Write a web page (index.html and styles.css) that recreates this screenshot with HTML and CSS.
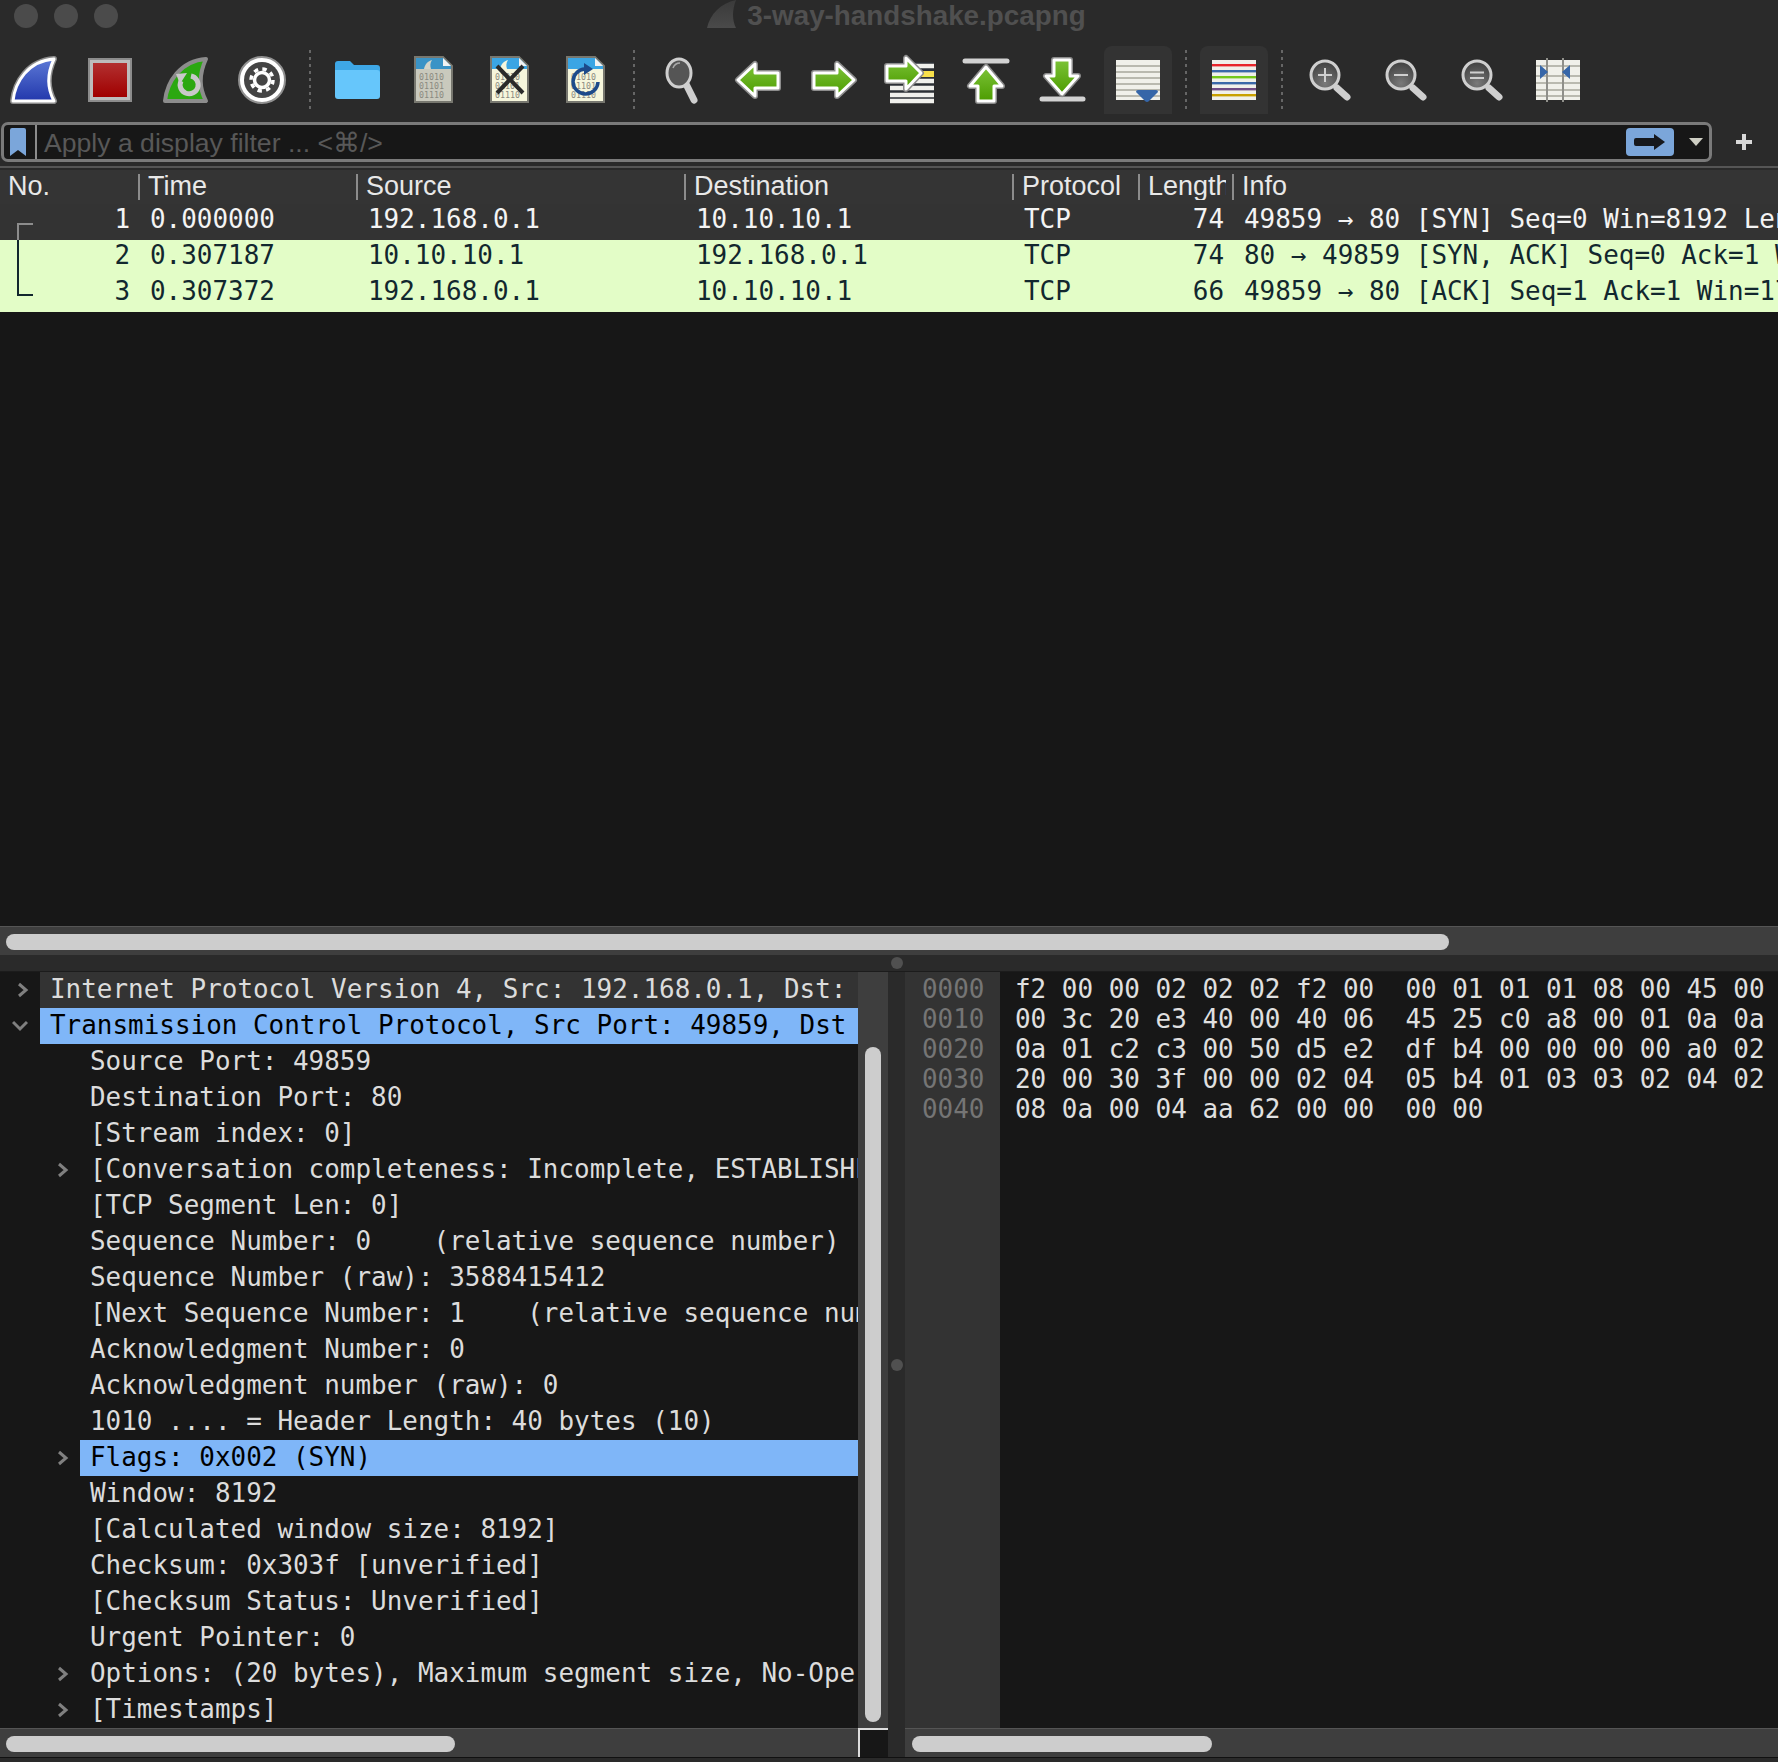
FILE: index.html
```html
<!DOCTYPE html>
<html lang="en">
<head>
    <meta charset="UTF-8">
    <meta name="viewport" content="width=device-width, initial-scale=1.0">
    <title>3-way-handshake.pcapng</title>
    <link rel="stylesheet" href="styles.css">
</head>
<body>
<div class="window">

    <!-- Title bar -->
    <div class="titlebar">
        <div class="lights"><i></i><i></i><i></i></div>
        <svg class="title-fin" width="30" height="30" viewBox="0 0 30 30">
            <defs><linearGradient id="fin" x1="0" y1="0" x2="0" y2="1"><stop offset="0" stop-color="#3a3a3a"/><stop offset="1" stop-color="#4a4a4a"/></linearGradient></defs>
            <path d="M0 28 C3 14 14 3 29 0 C25 10 25 20 29 28 Z" fill="url(#fin)"/>
        </svg>
        <span class="title-text">3-way-handshake.pcapng</span>
    </div>

    <!-- Toolbar -->
    <div class="toolbar">
        <div class="tool"><svg viewBox="0 0 68 68">
            <defs>
                <linearGradient id="blue" x1="0" y1="0" x2="0" y2="1"><stop offset="0" stop-color="#5c78d6"/><stop offset="1" stop-color="#2238ac"/></linearGradient>
                <linearGradient id="red" x1="0" y1="0" x2="0" y2="1"><stop offset="0" stop-color="#b23030"/><stop offset="1" stop-color="#a00000"/></linearGradient>
                <linearGradient id="green" x1="0" y1="0" x2="0" y2="1"><stop offset="0" stop-color="#7cc338"/><stop offset="1" stop-color="#4c9c00"/></linearGradient>
                <radialGradient id="lens" cx="0.5" cy="0.8" r="0.8"><stop offset="0" stop-color="#7a7a7a"/><stop offset="1" stop-color="#3e3e3e"/></radialGradient>
            </defs>
            <path class="edge" d="M13 55 C15 36 28 15 54 13 C47 28 47 42 54 55 Z"/>
            <path class="inner" fill="url(#blue)" d="M13 55 C15 36 28 15 54 13 C47 28 47 42 54 55 Z"/>
        </svg></div>
        <div class="tool"><svg viewBox="0 0 68 68">
            <rect x="13" y="13" width="42" height="42" fill="#bdbdbd" stroke="#8c8c8c" stroke-width="2"/>
            <rect x="17" y="17" width="34" height="34" fill="url(#red)"/>
        </svg></div>
        <div class="tool"><svg viewBox="0 0 68 68">
            <path d="M13 55 C15 36 28 15 54 13 C47 28 47 42 54 55 Z" fill="#2ba810" stroke="#8c8c8c" stroke-width="4" stroke-linejoin="round"/>
            <path d="M29 35 A9 9 0 1 0 39 30" fill="none" stroke="#c9c9c9" stroke-width="5"/>
            <path d="M28 38 L24 28 L35 27 Z" fill="#c9c9c9"/>
        </svg></div>
        <div class="tool"><svg viewBox="0 0 68 68">
            <circle cx="34" cy="34" r="23" fill="#fff" stroke="#909090" stroke-width="2"/>
            <circle cx="34" cy="34" r="18" fill="#444"/>
            <circle cx="34" cy="34" r="7.5" fill="none" stroke="#fff" stroke-width="3.5"/>
            <circle cx="34" cy="34" r="11" fill="none" stroke="#fff" stroke-width="3.5" stroke-dasharray="4.4 4.24"/>
        </svg></div>
        <div class="tool-sep"></div>
        <div class="tool"><svg viewBox="0 0 68 68">
            <path d="M11 18 Q11 15 14 15 H26 L30 19 H53 Q56 19 56 22 V30 H11 Z" fill="#3ea7e6"/>
            <path d="M11 24 H53 Q56 24 56 27 V50 Q56 53 53 53 H14 Q11 53 11 50 Z" fill="#66c6fb"/>
        </svg></div>
        <div class="tool"><svg viewBox="0 0 68 68">
            <path d="M15 11 H43 L52 20 V56 H15 Z" fill="#c9c9bd" stroke="#77776f" stroke-width="2"/>
            <path d="M16 12 H43 L51 20 V23 H16 Z" fill="#3a93c6"/>
            <path d="M43 12 L51 20 H43 Z" fill="#f2f2f2"/>
            <path d="M24 23 C25 18 28 15 32 14 C30 17 30 20 31 23 Z" fill="#d4d4c8"/>
            <text class="bits" x="19" y="34">01010</text>
            <text class="bits" x="19" y="43">01101</text>
            <text class="bits" x="19" y="52">01110</text>
        </svg></div>
        <div class="tool"><svg viewBox="0 0 68 68">
            <path d="M15 11 H43 L52 20 V56 H15 Z" fill="#f6f6dc" stroke="#77776f" stroke-width="2"/>
            <path d="M16 12 H43 L51 20 V23 H16 Z" fill="#3aa5e4"/>
            <path d="M43 12 L51 20 H43 Z" fill="#f2f2f2"/>
            <path d="M24 23 C25 18 28 15 32 14 C30 17 30 20 31 23 Z" fill="#f6f6dc"/>
            <text class="bits" x="19" y="34">01010</text>
            <text class="bits" x="19" y="43">01101</text>
            <text class="bits" x="19" y="52">01110</text>
            <path d="M21 20 L47 47 M47 20 L21 47" stroke="#2a2a2a" stroke-width="4" fill="none"/>
        </svg></div>
        <div class="tool"><svg viewBox="0 0 68 68">
            <path d="M15 11 H43 L52 20 V56 H15 Z" fill="#f6f6dc" stroke="#77776f" stroke-width="2"/>
            <path d="M16 12 H43 L51 20 V23 H16 Z" fill="#3aa5e4"/>
            <path d="M43 12 L51 20 H43 Z" fill="#f2f2f2"/>
            <text class="bits" x="19" y="34">01010</text>
            <text class="bits" x="19" y="43">01101</text>
            <text class="bits" x="19" y="52">01110</text>
            <path d="M33 23 A12.5 12.5 0 1 0 46 36" fill="none" stroke="#1d4a8a" stroke-width="3.5"/>
            <path d="M32 17 L41 23 L32 29 Z" fill="#1d4a8a"/>
        </svg></div>
        <div class="tool-sep"></div>
        <div class="tool"><svg viewBox="0 0 68 68">
            <path d="M38 38 L46 54" stroke="#cfcfcf" stroke-width="7" stroke-linecap="round"/>
            <ellipse cx="31" cy="27" rx="12" ry="14" fill="#555" stroke="#cfcfcf" stroke-width="3"/>
            <path d="M25 22 Q27 17 32 17" fill="none" stroke="#aaa" stroke-width="1.5"/>
        </svg></div>
        <div class="tool"><svg viewBox="0 0 68 68">
            <path class="edge" d="M14 34 L31 18 V27 H54 V42 H31 V50 Z"/>
            <path class="inner" fill="url(#green)" d="M14 34 L31 18 V27 H54 V42 H31 V50 Z"/>
        </svg></div>
        <div class="tool"><svg viewBox="0 0 68 68">
            <path class="edge" d="M54 34 L37 18 V27 H14 V42 H37 V50 Z"/>
            <path class="inner" fill="url(#green)" d="M54 34 L37 18 V27 H14 V42 H37 V50 Z"/>
        </svg></div>
        <div class="tool"><svg viewBox="0 0 68 68">
            <rect x="14" y="16" width="44" height="41" fill="#2c3036"/>
            <path d="M14 20 H58 M14 27.5 H58 M14 35 H58 M14 42 H58 M14 49 H58 M14 55 H58" stroke="#f0f0ec" stroke-width="4.5"/>
            <rect x="40" y="25" width="18" height="6" fill="#f8e04a"/>
            <path class="edge" d="M45 27 L30 12 V20 H11 V35 H30 V43 Z"/>
            <path class="inner" fill="url(#green)" d="M45 27 L30 12 V20 H11 V35 H30 V43 Z"/>
        </svg></div>
        <div class="tool"><svg viewBox="0 0 68 68">
            <path d="M13 15 H55" stroke="#d2d2d2" stroke-width="5" stroke-linecap="round"/>
            <path class="edge" d="M34 21 L18 40 H26 V55 H42 V40 H50 Z"/>
            <path class="inner" fill="url(#green)" d="M34 21 L18 40 H26 V55 H42 V40 H50 Z"/>
        </svg></div>
        <div class="tool"><svg viewBox="0 0 68 68">
            <path d="M14 53 H55" stroke="#d2d2d2" stroke-width="5" stroke-linecap="round"/>
            <path class="edge" d="M34 48 L18 30 H26 V14 H42 V30 H50 Z"/>
            <path class="inner" fill="url(#green)" d="M34 48 L18 30 H26 V14 H42 V30 H50 Z"/>
        </svg></div>
        <div class="tool is-on"><svg viewBox="0 0 68 68">
            <rect x="12" y="14" width="44" height="40" fill="#f0f0ea"/>
            <path d="M12 20 H56 M12 26 H56 M12 32 H56 M12 38 H56 M12 44 H56 M12 50 H56" stroke="#b9b9af" stroke-width="2"/>
            <path d="M32 46 Q32 44 34 44 H52 Q54 44 54 46 L45 55 Q43 57 41 55 Z" fill="#3666a8"/>
        </svg></div>
        <div class="tool-sep"></div>
        <div class="tool is-on"><svg viewBox="0 0 68 68">
            <rect x="12" y="14" width="44" height="40" fill="#f0f0ea"/>
            <rect x="12" y="18" width="44" height="2.4" fill="#e8262c"/>
            <rect x="12" y="24" width="44" height="2.4" fill="#3a68a8"/>
            <rect x="12" y="30" width="44" height="2.4" fill="#74c81c"/>
            <rect x="12" y="36" width="44" height="2.4" fill="#3a68a8"/>
            <rect x="12" y="42" width="44" height="2.4" fill="#6e4a84"/>
            <rect x="12" y="48" width="44" height="2.4" fill="#c8a000"/>
        </svg></div>
        <div class="tool-sep"></div>
        <div class="tool"><svg viewBox="0 0 68 68">
            <path d="M41 42 L51 51" stroke="#cfcfcf" stroke-width="7" stroke-linecap="round"/>
            <circle cx="29" cy="29" r="14" fill="url(#lens)" stroke="#cfcfcf" stroke-width="3"/>
            <path d="M22 29 H36 M29 22 V36" stroke="#cfcfcf" stroke-width="2"/>
        </svg></div>
        <div class="tool"><svg viewBox="0 0 68 68">
            <path d="M41 42 L51 51" stroke="#cfcfcf" stroke-width="7" stroke-linecap="round"/>
            <circle cx="29" cy="29" r="14" fill="url(#lens)" stroke="#cfcfcf" stroke-width="3"/>
            <path d="M22 29 H36" stroke="#cfcfcf" stroke-width="2"/>
        </svg></div>
        <div class="tool"><svg viewBox="0 0 68 68">
            <path d="M41 42 L51 51" stroke="#cfcfcf" stroke-width="7" stroke-linecap="round"/>
            <circle cx="29" cy="29" r="14" fill="url(#lens)" stroke="#cfcfcf" stroke-width="3"/>
            <path d="M22 26.5 H36 M22 32 H36" stroke="#cfcfcf" stroke-width="2"/>
        </svg></div>
        <div class="tool"><svg viewBox="0 0 68 68">
            <rect x="12" y="14" width="44" height="40" fill="#f0f0ea"/>
            <path d="M12 20 H56 M12 30 H56 M12 37 H56 M12 44 H56 M12 50 H56" stroke="#b9b9af" stroke-width="2"/>
            <path d="M23 12 V56 M39 12 V56" stroke="#8f8f8a" stroke-width="2"/>
            <path d="M16 19 L24 26 L16 33 Z" fill="#3666a8"/>
            <path d="M46 19 L38 26 L46 33 Z" fill="#3666a8"/>
        </svg></div>
    </div>

    <!-- Display filter -->
    <div class="filter-row">
        <div class="filter">
            <div class="bookmark"><svg width="16" height="28" viewBox="0 0 16 28"><path d="M0 2 Q0 0 2 0 H14 Q16 0 16 2 V28 L8 22 L0 28 Z" fill="#7ba6da"/></svg></div>
            <div class="filter-input">Apply a display filter ... &lt;⌘/&gt;</div>
            <div class="apply"><svg width="32" height="16" viewBox="0 0 32 16"><path d="M2 4 H20 V0 L31 8 L20 16 V12 H2 Q0 12 0 10 V6 Q0 4 2 4 Z" fill="#16181c"/></svg></div>
            <div class="filter-drop"></div>
        </div>
        <div class="filter-add"><svg width="16" height="16" viewBox="0 0 16 16"><path d="M8 0 V16 M0 8 H16" stroke="#d8d8d8" stroke-width="4"/></svg></div>
    </div>
    <div class="filter-rule"></div>

    <!-- Packet list -->
    <div class="packets">
        <div class="cols head">
            <div class="hcell first">No.</div>
            <div class="hcell">Time</div>
            <div class="hcell">Source</div>
            <div class="hcell">Destination</div>
            <div class="hcell">Protocol</div>
            <div class="hcell clip">Length</div>
            <div class="hcell">Info</div>
        </div>
        <div class="cols pkt pkt-dark">
            <div class="cell num"><span class="conv conv-top"></span>1</div>
            <div class="cell">0.000000</div>
            <div class="cell">192.168.0.1</div>
            <div class="cell">10.10.10.1</div>
            <div class="cell">TCP</div>
            <div class="cell num">74</div>
            <div class="cell">49859 → 80 [SYN] Seq=0 Win=8192 Len=0 MSS=1460 WS=4 SACK_PERM=1</div>
        </div>
        <div class="cols pkt pkt-green">
            <div class="cell num"><span class="conv conv-mid"></span>2</div>
            <div class="cell">0.307187</div>
            <div class="cell">10.10.10.1</div>
            <div class="cell">192.168.0.1</div>
            <div class="cell">TCP</div>
            <div class="cell num">74</div>
            <div class="cell">80 → 49859 [SYN, ACK] Seq=0 Ack=1 Win=8192 Len=0 MSS=1460</div>
        </div>
        <div class="cols pkt pkt-green">
            <div class="cell num"><span class="conv conv-end"></span>3</div>
            <div class="cell">0.307372</div>
            <div class="cell">192.168.0.1</div>
            <div class="cell">10.10.10.1</div>
            <div class="cell">TCP</div>
            <div class="cell num">66</div>
            <div class="cell">49859 → 80 [ACK] Seq=1 Ack=1 Win=17520 Len=0 TSval=0</div>
        </div>
    </div>
    <div class="hscroll"><div class="thumb-h packets-thumb"></div></div>
    <div class="split-h"><i class="dot"></i></div>

    <!-- Details and bytes -->
    <div class="panes">
        <div class="detail">
            <div class="tree">
                <div class="node"><span class="slot l0"><svg class="chev" width="12" height="16" viewBox="0 0 12 16"><path d="M2 2 L9 8 L2 14"/></svg></span><span class="label shade">Internet Protocol Version 4, Src: 192.168.0.1, Dst: 10.10.10.1</span></div>
                <div class="node"><span class="slot l0"><svg class="chev down" width="16" height="12" viewBox="0 0 16 12"><path d="M1 2 L8 9 L15 2"/></svg></span><span class="label picked">Transmission Control Protocol, Src Port: 49859, Dst Port: 80, Seq: 0, Len: 0</span></div>
                <div class="node"><span class="slot l1"></span><span class="label">Source Port: 49859</span></div>
                <div class="node"><span class="slot l1"></span><span class="label">Destination Port: 80</span></div>
                <div class="node"><span class="slot l1"></span><span class="label">[Stream index: 0]</span></div>
                <div class="node"><span class="slot l1"><svg class="chev" width="12" height="16" viewBox="0 0 12 16"><path d="M2 2 L9 8 L2 14"/></svg></span><span class="label">[Conversation completeness: Incomplete, ESTABLISHED (7)]</span></div>
                <div class="node"><span class="slot l1"></span><span class="label">[TCP Segment Len: 0]</span></div>
                <div class="node"><span class="slot l1"></span><span class="label">Sequence Number: 0    (relative sequence number)</span></div>
                <div class="node"><span class="slot l1"></span><span class="label">Sequence Number (raw): 3588415412</span></div>
                <div class="node"><span class="slot l1"></span><span class="label">[Next Sequence Number: 1    (relative sequence number)]</span></div>
                <div class="node"><span class="slot l1"></span><span class="label">Acknowledgment Number: 0</span></div>
                <div class="node"><span class="slot l1"></span><span class="label">Acknowledgment number (raw): 0</span></div>
                <div class="node"><span class="slot l1"></span><span class="label">1010 .... = Header Length: 40 bytes (10)</span></div>
                <div class="node"><span class="slot l1"><svg class="chev" width="12" height="16" viewBox="0 0 12 16"><path d="M2 2 L9 8 L2 14"/></svg></span><span class="label picked">Flags: 0x002 (SYN)</span></div>
                <div class="node"><span class="slot l1"></span><span class="label">Window: 8192</span></div>
                <div class="node"><span class="slot l1"></span><span class="label">[Calculated window size: 8192]</span></div>
                <div class="node"><span class="slot l1"></span><span class="label">Checksum: 0x303f [unverified]</span></div>
                <div class="node"><span class="slot l1"></span><span class="label">[Checksum Status: Unverified]</span></div>
                <div class="node"><span class="slot l1"></span><span class="label">Urgent Pointer: 0</span></div>
                <div class="node"><span class="slot l1"><svg class="chev" width="12" height="16" viewBox="0 0 12 16"><path d="M2 2 L9 8 L2 14"/></svg></span><span class="label">Options: (20 bytes), Maximum segment size, No-Operation (NOP)</span></div>
                <div class="node"><span class="slot l1"><svg class="chev" width="12" height="16" viewBox="0 0 12 16"><path d="M2 2 L9 8 L2 14"/></svg></span><span class="label">[Timestamps]</span></div>
            </div>
            <div class="vscroll"><div class="thumb-v"></div></div>
            <div class="hscroll"><div class="thumb-h tree-thumb"></div></div>
            <div class="corner"></div>
        </div>

        <div class="split-v"><i class="dot"></i></div>

        <div class="bytes">
            <div class="hex">
                <div class="offsets">
                    <div>0000</div>
                    <div>0010</div>
                    <div>0020</div>
                    <div>0030</div>
                    <div>0040</div>
                </div>
                <div class="dump">
                    <div>f2 00 00 02 02 02 f2 00  00 01 01 01 08 00 45 00</div>
                    <div>00 3c 20 e3 40 00 40 06  45 25 c0 a8 00 01 0a 0a</div>
                    <div>0a 01 c2 c3 00 50 d5 e2  df b4 00 00 00 00 a0 02</div>
                    <div>20 00 30 3f 00 00 02 04  05 b4 01 03 03 02 04 02</div>
                    <div>08 0a 00 04 aa 62 00 00  00 00</div>
                </div>
            </div>
            <div class="hscroll bytes-scroll"><div class="thumb-h hex-thumb"></div></div>
        </div>
    </div>
    <div class="foot"></div>
</div>
</body>
</html>
```

FILE: styles.css
```css
html, body {
    margin: 0;
    padding: 0;
    height: 100%;
    overflow: hidden;
    background-color: #2a2a2a;
}

.window {
    display: flex;
    flex-direction: column;
    height: 100vh;
    font-family: "Liberation Sans", Arial, sans-serif;
}

/* title bar */
.titlebar {
    position: relative;
    display: flex;
    justify-content: center;
    height: 46px;
    padding-left: 15px;
    background-color: #2a2a2a;
}

.lights {
    position: absolute;
    top: 4px;
    left: 14px;
    display: flex;
    gap: 16px;
}

.lights i {
    width: 24px;
    height: 24px;
    border-radius: 50%;
    background-color: #4b4b4b;
}

.title-fin {
    margin-right: 10px;
}

.title-text {
    font-size: 27.8px;
    line-height: 31px;
    font-weight: bold;
    color: #505050;
}

/* toolbar */
.toolbar {
    display: flex;
    gap: 8px;
    height: 68px;
}

.tool {
    width: 68px;
    height: 68px;
    border-radius: 8px 8px 0 0;
}

.tool svg {
    display: block;
    width: 68px;
    height: 68px;
}

.tool.is-on {
    background-color: #333;
}

.tool-sep {
    width: 12px;
    height: 62px;
    margin-top: 2px;
    background-image: radial-gradient(circle, #666 1.2px, transparent 1.5px);
    background-size: 12px 7px;
    background-repeat: repeat-y;
}

.edge {
    fill: none;
    stroke: #8c8c8c;
    stroke-width: 6;
    stroke-linejoin: round;
}

.inner {
    stroke: #fff;
    stroke-width: 3;
    stroke-linejoin: round;
}

.bits {
    font-family: "DejaVu Sans Mono", monospace;
    font-size: 8.3px;
    fill: #8a8a80;
}

/* display filter */
.filter-row {
    display: flex;
    align-items: center;
    height: 40px;
    margin-top: 8px;
    padding-left: 1px;
}

.filter {
    display: flex;
    align-items: center;
    box-sizing: border-box;
    width: 1711px;
    height: 40px;
    background-color: #171717;
    border: 3px solid #7a7a7a;
    border-radius: 7px;
}

.bookmark {
    display: flex;
    align-items: center;
    box-sizing: border-box;
    width: 33px;
    height: 100%;
    padding-left: 6px;
    border-right: 2px solid #8c8c8c;
}

.filter-input {
    flex: 1;
    padding: 1px 0 0 7px;
    font-size: 26.6px;
    line-height: 34px;
    color: #585858;
}

.apply {
    display: flex;
    align-items: center;
    justify-content: center;
    width: 48px;
    height: 28px;
    margin-right: -1px;
    background-color: #7ba6da;
    border-radius: 4px;
}

.filter-drop {
    width: 0;
    height: 0;
    margin: 0 6px 0 16px;
    border-left: 7px solid transparent;
    border-right: 7px solid transparent;
    border-top: 8px solid #cfcfc4;
}

.filter-add {
    display: flex;
    justify-content: center;
    flex: 1;
    padding-right: 2px;
}

.filter-rule {
    height: 2px;
    margin: 4px 0 2px;
    background-color: #555;
}

/* packet list */
.packets {
    flex: none;
    height: 756px;
    overflow: hidden;
    background-color: #171717;
    font-family: "DejaVu Sans Mono", monospace;
    font-size: 25.95px;
}

.cols {
    display: grid;
    grid-template-columns: 138px 218px 328px 328px 126px 94px minmax(0, 1fr);
}

.head {
    height: 34px;
    background-color: #343434;
    font-family: "Liberation Sans", Arial, sans-serif;
}

.hcell {
    height: 26px;
    margin-top: 4px;
    padding-left: 8px;
    border-left: 2px solid #8c8c8c;
    font-size: 27px;
    line-height: 24px;
    color: #e8e8e8;
    overflow: hidden;
    white-space: nowrap;
}

.hcell.first {
    border-left: none;
}

.hcell.clip {
    margin-right: 6px;
}

.pkt {
    height: 36px;
    line-height: 30px;
}

.pkt-dark {
    background-color: #333;
    color: #f4f4f4;
}

.pkt-green {
    background-color: #e3fdc7;
    color: #12272e;
}

.cell {
    position: relative;
    padding-left: 12px;
    white-space: pre;
    overflow: hidden;
}

.cell.num {
    padding: 0 8px 0 0;
    text-align: right;
}

.conv {
    position: absolute;
    left: 17px;
    width: 14px;
}

.conv-top {
    top: 19px;
    bottom: 0;
    border-top: 2px solid #8c8c8c;
    border-left: 2px solid #8c8c8c;
}

.conv-mid {
    top: 0;
    bottom: 0;
    border-left: 2px solid #12272e;
}

.conv-end {
    top: 0;
    height: 18px;
    border-left: 2px solid #12272e;
    border-bottom: 2px solid #12272e;
}

/* scrollbars */
.hscroll {
    box-sizing: border-box;
    height: 29px;
    padding: 7px 6px 0;
    background-color: #3e3e3e;
    border-top: 1px solid #555;
}

.thumb-h {
    height: 16px;
    border-radius: 8px;
    background-color: #cdcdcd;
}

.packets-thumb {
    width: 1443px;
}

.tree-thumb {
    width: 449px;
}

.hex-thumb {
    width: 300px;
}

.bytes-scroll {
    padding-left: 7px;
}

.vscroll {
    box-sizing: border-box;
    display: flex;
    justify-content: center;
    padding: 75px 0 6px;
    background-color: #3e3e3e;
}

.thumb-v {
    width: 16px;
    border-radius: 8px;
    background-color: #cdcdcd;
}

.corner {
    box-sizing: border-box;
    background-color: #171717;
    border-top: 2px solid #ddd;
    border-left: 2px solid #ddd;
}

/* splitters */
.split-h {
    display: flex;
    align-items: center;
    justify-content: center;
    height: 17px;
    padding-left: 16px;
    box-sizing: border-box;
    border-bottom: 1px solid #1c1c1c;
}

.dot {
    width: 12px;
    height: 12px;
    border-radius: 50%;
    background-color: #505050;
}

.panes {
    display: flex;
    flex: none;
    height: 785px;
    font-family: "DejaVu Sans Mono", monospace;
    font-size: 25.95px;
}

.detail {
    display: grid;
    grid-template-columns: 858px 30px;
    grid-template-rows: 756px 29px;
    width: 888px;
}

.split-v {
    display: flex;
    align-items: center;
    justify-content: center;
    width: 17px;
}

/* packet details tree */
.tree {
    overflow: hidden;
    background-color: #171717;
    color: #dcdcdc;
}

.node {
    display: flex;
    height: 36px;
}

.slot {
    display: flex;
    align-items: center;
    justify-content: flex-end;
    flex: none;
    padding-right: 11px;
    box-sizing: border-box;
}

.slot.l0 {
    width: 40px;
}

.slot.l1 {
    width: 80px;
}

.chev {
    fill: none;
    stroke: #808080;
    stroke-width: 3;
}

.chev.down {
    margin-right: 1px;
}

.label {
    flex: 1;
    min-width: 0;
    padding-left: 10px;
    line-height: 34px;
    white-space: pre;
    overflow: hidden;
}

.label.shade {
    background-color: #333;
}

.label.picked {
    background-color: #7fb6f8;
    color: #000;
}

/* packet bytes */
.bytes {
    display: flex;
    flex: 1;
    flex-direction: column;
    min-width: 0;
}

.hex {
    display: flex;
    flex: 1;
    min-height: 0;
    background-color: #171717;
    line-height: 30px;
}

.offsets {
    box-sizing: border-box;
    width: 95px;
    padding: 2px 0 0 17px;
    background-color: #333;
    color: #757575;
}

.dump {
    padding: 2px 0 0 15px;
    color: #e0e0e0;
}

.dump div {
    white-space: pre;
}

.foot {
    flex: 1;
    border-top: 1px solid #111;
    background-color: #2a2a2a;
}
```
